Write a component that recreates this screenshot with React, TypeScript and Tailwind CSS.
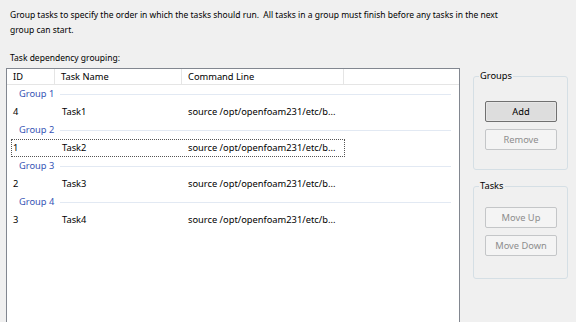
import React from 'react';

type Task = { id: string; name: string; command: string };
type Group = { title: string; tasks: Task[] };

const groups: Group[] = [
  { title: 'Group 1', tasks: [{ id: '4', name: 'Task1', command: 'source /opt/openfoam231/etc/b...' }] },
  { title: 'Group 2', tasks: [{ id: '1', name: 'Task2', command: 'source /opt/openfoam231/etc/b...' }] },
  { title: 'Group 3', tasks: [{ id: '2', name: 'Task3', command: 'source /opt/openfoam231/etc/b...' }] },
  { title: 'Group 4', tasks: [{ id: '3', name: 'Task4', command: 'source /opt/openfoam231/etc/b...' }] },
];

const font = { fontFamily: '"Noto Sans", "Open Sans", sans-serif' };

const WinButton: React.FC<{ label: string; disabled?: boolean; isDefault?: boolean }> = ({ label, disabled, isDefault }) => (
  <button
    disabled={disabled}
    className={`w-[72px] h-[21px] flex items-center justify-center text-[9.3px] leading-none rounded-[2px] border ${
      disabled
        ? 'border-[#c4c6c8] bg-[#f4f4f4] text-[#8d8d8d]'
        : isDefault
          ? 'border-[#707070] bg-[#dddddd] text-black shadow-[inset_0_0_0_1px_#e6e6e6]'
          : 'border-[#707070] bg-[#e5e5e5] text-black'
    }`}
  >
    {label}
  </button>
);

const Frame: React.FC<{ title: string; className?: string; children: React.ReactNode }> = ({ title, className, children }) => (
  <fieldset className={`w-[95px] border border-[#d5dfe5] rounded-[3px] ${className ?? ''}`}>
    <legend className="ml-[5px] px-[1px] text-[9.3px] leading-[14px] text-black">{title}</legend>
    {children}
  </fieldset>
);

export default function App() {
  return (
    <div className="w-[576px] h-[322px] bg-[#f0f0f0] overflow-hidden text-black" style={font}>
      <div className="pl-[10px] pt-[7px] text-[8.5px] leading-[15px]">
        <p className="whitespace-pre">Group tasks to specify the order in which the tasks should run.  All tasks in a group must finish before any tasks in the next</p>
        <p>group can start.</p>
        <p className="mt-[13px]">Task dependency grouping:</p>
      </div>

      <div className="flex mt-[3px]">
        {/* List view */}
        <div className="ml-[6px] w-[454px] h-[270px] bg-white border border-[#828790] text-[9.3px] whitespace-nowrap">
          <div className="flex h-[16px] border-b border-[#e5e5e5] leading-[16px]">
            <div className="w-[48px] shrink-0 pl-[6px] border-r border-[#e5e5e5]">ID</div>
            <div className="w-[127px] shrink-0 pl-[6px] border-r border-[#e5e5e5]">Task Name</div>
            <div className="w-[162px] shrink-0 pl-[6px] border-r border-[#e5e5e5]">Command Line</div>
            <div className="flex-1" />
          </div>

          {groups.map((group, gi) => (
            <div key={group.title}>
              <div className="flex items-center h-[18px] pl-[12px] pr-[8px]">
                <span className="text-[#3553b5]">{group.title}</span>
                <div className="flex-1 ml-[6px] h-px bg-[#e2e9f3]" />
              </div>
              {group.tasks.map(task => (
                <div
                  key={task.id}
                  className={`flex items-center h-[18px] ml-[4px] w-[334px] ${
                    gi === 1 ? 'border border-dotted border-[#555]' : 'border border-transparent'
                  }`}
                >
                  <div className="w-[50px] shrink-0 pl-[1px]">{task.id}</div>
                  <div className="w-[126px] shrink-0">{task.name}</div>
                  <div>{task.command}</div>
                </div>
              ))}
            </div>
          ))}
        </div>

        {/* Side buttons */}
        <div className="pl-[13px] mt-[1px]">
          <Frame title="Groups" className="h-[101px]">
            <div className="pl-[11px] pt-[18px] flex flex-col gap-[7px]">
              <WinButton label="Add" isDefault />
              <WinButton label="Remove" disabled />
            </div>
          </Frame>
          <Frame title="Tasks" className="mt-[9px] h-[100px]">
            <div className="pl-[11px] pt-[14px] flex flex-col gap-[7px]">
              <WinButton label="Move Up" disabled />
              <WinButton label="Move Down" disabled />
            </div>
          </Frame>
        </div>
      </div>
    </div>
  );
}
